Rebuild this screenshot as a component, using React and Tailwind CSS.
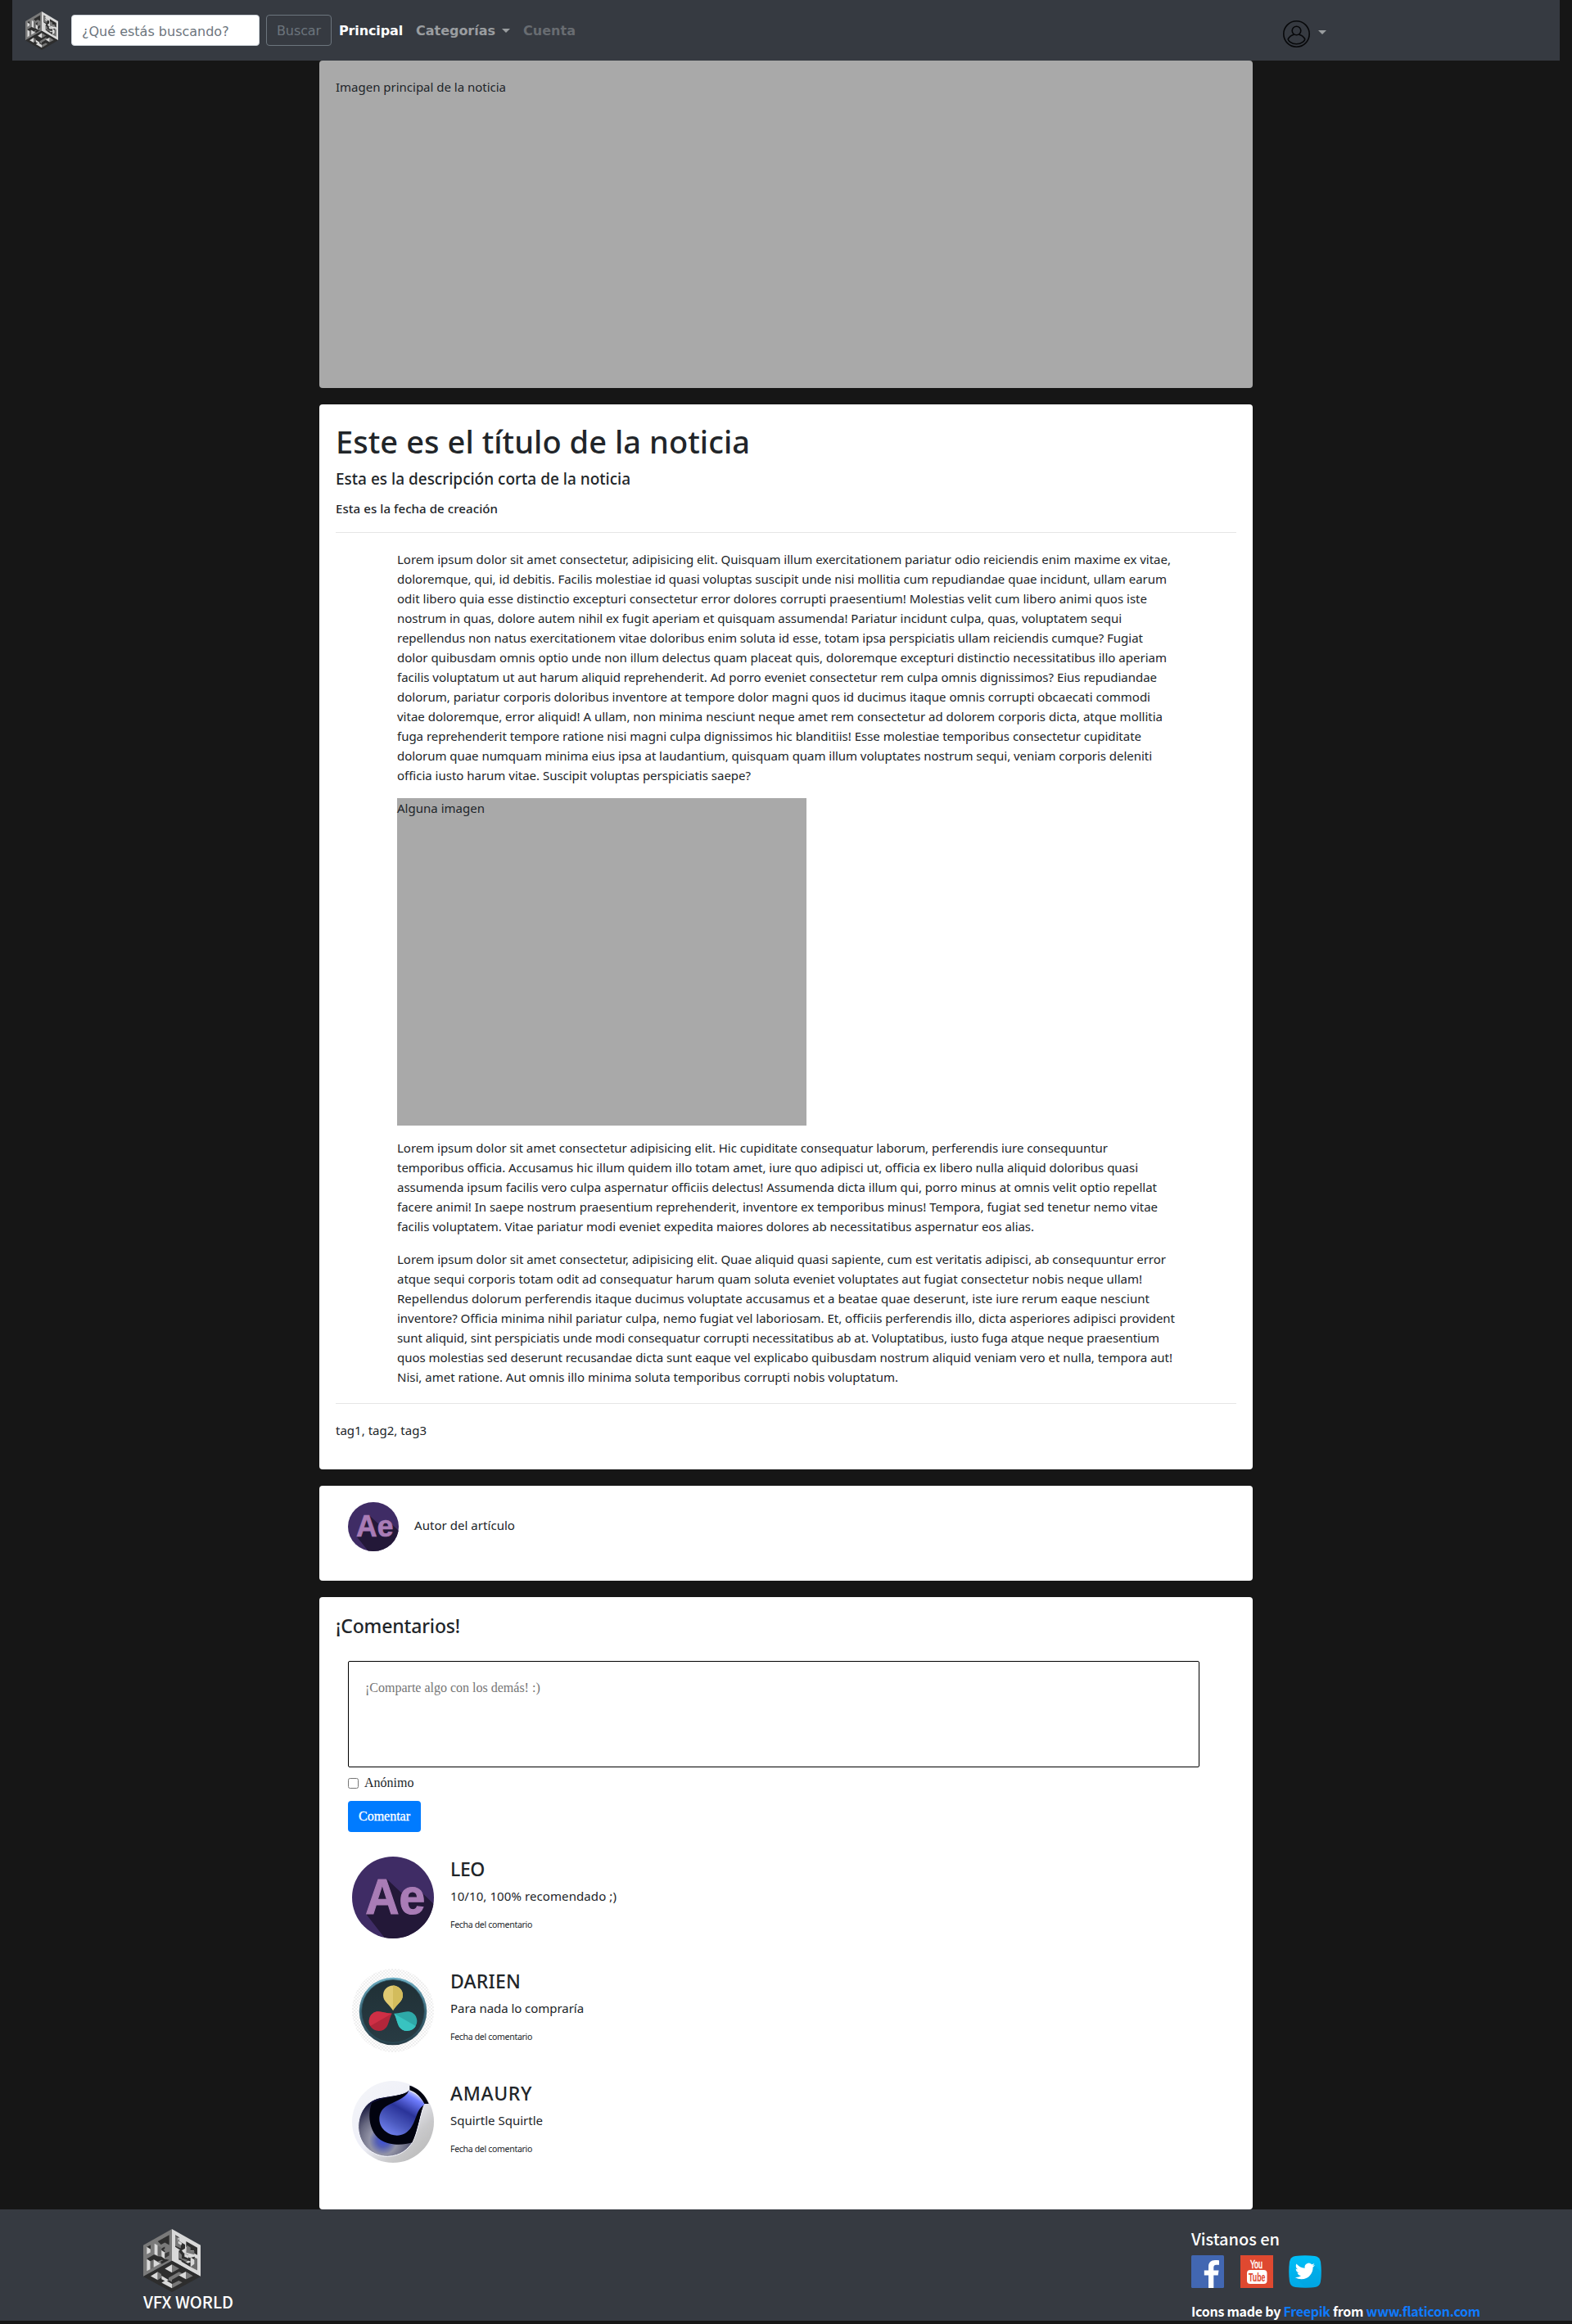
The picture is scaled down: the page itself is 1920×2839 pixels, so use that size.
import React, { useLayoutEffect, useRef, useState } from "react";

/* Text set to an exact advance width by adjusting its tracking. */
function Fit({ w, className = "", children }) {
  const ref = useRef(null);
  const [spacing, setSpacing] = useState(0);
  useLayoutEffect(() => {
    const el = ref.current;
    const natural = el.getBoundingClientRect().width - spacing * el.textContent.length;
    setSpacing((w - natural) / el.textContent.length);
  }, [w]);
  return (
    <span
      ref={ref}
      className={"inline-block whitespace-nowrap " + className}
      style={{ letterSpacing: spacing + "px" }}
    >
      {children}
    </span>
  );
}

const intro = [
  [945, "Lorem ipsum dolor sit amet consectetur, adipisicing elit. Quisquam illum exercitationem pariatur odio reiciendis enim maxime ex vitae,"],
  [940, "doloremque, qui, id debitis. Facilis molestiae id quasi voluptas suscipit unde nisi mollitia cum repudiandae quae incidunt, ullam earum"],
  [916, "odit libero quia esse distinctio excepturi consectetur error dolores corrupti praesentium! Molestias velit cum libero animi quos iste"],
  [885, "nostrum in quas, dolore autem nihil ex fugit aperiam et quisquam assumenda! Pariatur incidunt culpa, quas, voluptatem sequi"],
  [911, "repellendus non natus exercitationem vitae doloribus enim soluta id esse, totam ipsa perspiciatis ullam reiciendis cumque? Fugiat"],
  [940, "dolor quibusdam omnis optio unde non illum delectus quam placeat quis, doloremque excepturi distinctio necessitatibus illo aperiam"],
  [928, "facilis voluptatum ut aut harum aliquid reprehenderit. Ad porro eveniet consectetur rem culpa omnis dignissimos? Eius repudiandae"],
  [920, "dolorum, pariatur corporis doloribus inventore at tempore dolor magni quos id ducimus itaque omnis corrupti obcaecati commodi"],
  [935, "vitae doloremque, error aliquid! A ullam, non minima nesciunt neque amet rem consectetur ad dolorem corporis dicta, atque mollitia"],
  [909, "fuga reprehenderit tempore ratione nisi magni culpa dignissimos hic blanditiis! Esse molestiae temporibus consectetur cupiditate"],
  [922, "dolorum quae numquam minima eius ipsa at laudantium, quisquam quam illum voluptates nostrum sequi, veniam corporis deleniti"],
  [432, "officia iusto harum vitae. Suscipit voluptas perspiciatis saepe?"],
];
const middle = [
  [868, "Lorem ipsum dolor sit amet consectetur adipisicing elit. Hic cupiditate consequatur laborum, perferendis iure consequuntur"],
  [905, "temporibus officia. Accusamus hic illum quidem illo totam amet, iure quo adipisci ut, officia ex libero nulla aliquid doloribus quasi"],
  [928, "assumenda ipsum facilis vero culpa aspernatur officiis delectus! Assumenda dicta illum qui, porro minus at omnis velit optio repellat"],
  [929, "facere animi! In saepe nostrum praesentium reprehenderit, inventore ex temporibus minus! Tempora, fugiat sed tenetur nemo vitae"],
  [778, "facilis voluptatem. Vitae pariatur modi eveniet expedita maiores dolores ab necessitatibus aspernatur eos alias."],
];
const closing = [
  [939, "Lorem ipsum dolor sit amet consectetur, adipisicing elit. Quae aliquid quasi sapiente, cum est veritatis adipisci, ab consequuntur error"],
  [910, "atque sequi corporis totam odit ad consequatur harum quam soluta eveniet voluptates aut fugiat consectetur nobis neque ullam!"],
  [919, "Repellendus dolorum perferendis itaque ducimus voluptate accusamus et a beatae quae deserunt, iste iure rerum eaque nesciunt"],
  [950, "inventore? Officia minima nihil pariatur culpa, nemo fugiat vel laboriosam. Et, officiis perferendis illo, dicta asperiores adipisci provident"],
  [931, "sunt aliquid, sint perspiciatis unde modi consequatur corrupti necessitatibus ab at. Voluptatibus, iusto fuga atque neque praesentium"],
  [947, "quos molestias sed deserunt recusandae dicta sunt eaque vel explicabo quibusdam nostrum aliquid veniam vero et nulla, tempora aut!"],
  [612, "Nisi, amet ratione. Aut omnis illo minima soluta temporibus corrupti nobis voluptatum."],
];

function Paragraph({ lines, className = "" }) {
  return (
    <p className={"leading-6 " + className}>
      {lines.map(([w, text]) => (
        <span key={text} className="block h-6">
          <Fit w={w}>{text}</Fit>
        </span>
      ))}
    </p>
  );
}

function CubeLogo({ className }) {
  return (
    <svg viewBox="9 15 210 230" preserveAspectRatio="none" className={className}>
      <path d="M114 15 9 74v114l105-57z" fill="#7a7a7a" />
      <path d="M114 15 219 74v114l-105-57z" fill="#d9d9d9" />
      <path d="M114 131 219 188 114 245 9 188z" fill="#2d2d2d" />
      {/* left face */}
      <path d="M62 60 104 37v36L88 64l-14 8z" fill="#2e2e2e" />
      <path d="M22 80l13 8v12l-13 7z" fill="#d9d9d9" />
      <path d="M22 80l14-7v15z" fill="#2e2e2e" />
      <path d="M50 68l12 7v38l-12-6z" fill="#d9d9d9" />
      <path d="M62 75l12 7v26l-12 5z" fill="#6a6a6a" />
      <path d="M76 92l12 8v26l-12-9z" fill="#d9d9d9" />
      <path d="M76 92v-6l12-7v8l-6 4 6 3v6z" fill="#2e2e2e" />
      <path d="M88 104l16-7v14l-16 10z" fill="#3a3a3a" />
      <path d="M22 128v-5l26-15 14 6 14 2 12 8v6l-12-2-14 6-14-8-13 7z" fill="#2e2e2e" />
      <path d="M22 124l13 9v28l-13 7z" fill="#d9d9d9" />
      <path d="M35 133l12-7v30l-12 6z" fill="#6a6a6a" />
      <path d="M47 126l24 15-24 14z" fill="#d9d9d9" />
      <path d="M72 134l18-9 14 3-28 15z" fill="#2e2e2e" />
      {/* right face */}
      <path d="M126 37l14 8v14l22 13v14l-14 8-22-14z" fill="#2e2e2e" />
      <path d="M126 38l12 11-2 13 12 7-2 16-20-9z" fill="#777" />
      <path d="M135 45l6 4-4 9 14 8-3 8-11-7z" fill="#d9d9d9" />
      <path d="M166 60l41 23v27l-12-7v-9l-15-1-14-14z" fill="#2e2e2e" />
      <path d="M168 74l14 8v12l14 2v12l-30-7z" fill="#777" />
      <path d="M139 94l8-4 10 12 15 6 6 12 20-4v11l-12 8-12-5-10 5-25-8z" fill="#2e2e2e" />
      <path d="M139 97l11 12v13l22 6-6 7-27-15z" fill="#777" />
      <path d="M160 103l18 10-4 9-14-6z" fill="#d9d9d9" />
      <path d="M182 118l14 8v12l-14 5z" fill="#d9d9d9" />
      <path d="M196 118l11 5v43l-25-13 14-10z" fill="#6c6c6c" />
      <path d="M149 128l24 12 9-5v18l-33-19z" fill="#2e2e2e" />
      {/* bottom face */}
      <path d="M114 144v30l-26-14z" fill="#d9d9d9" />
      <path d="M114 144l27 15-27 15z" fill="#777" />
      <path d="M62 171v30l-26-14z" fill="#d9d9d9" />
      <path d="M62 171l13 8v14l-13 8z" fill="#777" />
      <path d="M76 185l26 16-6 4 18 10v16l-38-20 12-7-12-6z" fill="#d9d9d9" />
      <path d="M102 193l38-22 13 7-39 22v8l-12-6z" fill="#777" />
      <path d="M139 184l26-14v28z" fill="#d9d9d9" />
      <path d="M165 170l26 16-26 13z" fill="#777" />
      <path d="M114 216l25-13 13 7-38 21z" fill="#777" />
    </svg>
  );
}

function AfterEffects({ className }) {
  return (
    <svg viewBox="0 0 100 100" preserveAspectRatio="none" className={className}>
      <defs>
        <clipPath id="aeDisc"><circle cx="50" cy="50" r="50" /></clipPath>
      </defs>
      <g clipPath="url(#aeDisc)">
        <rect width="100" height="100" fill="#3f2c65" />
        <path d="M42 27 60 44 79 38 110 68V110H48L17 70z" fill="#231838" />
      </g>
      <text x="16.3" y="69.700" fontSize="60.500" fontFamily="Liberation Sans" fontWeight="700" fill="#a97cb6" stroke="#a97cb6" strokeWidth="1.200" textLength="73" lengthAdjust="spacingAndGlyphs">Ae</text>
    </svg>
  );
}

function Resolve({ className }) {
  return (
    <svg viewBox="0 0 100 102" className={className}>
      <defs>
        <pattern id="check" width="4" height="4" patternUnits="userSpaceOnUse">
          <rect width="4" height="4" fill="#fdfdfd" />
          <path d="M0 0h2v2H0zM2 2h2v2H2z" fill="#efefef" />
        </pattern>
        <linearGradient id="ring" x1="0" y1="0" x2="0" y2="1">
          <stop offset="0" stopColor="#6eaec3" />
          <stop offset="0.5" stopColor="#3d6b7c" />
          <stop offset="1" stopColor="#263c46" />
        </linearGradient>
        <linearGradient id="dial" x1="0" y1="0" x2="0" y2="1">
          <stop offset="0" stopColor="#203036" />
          <stop offset="1" stopColor="#283b43" />
        </linearGradient>
      </defs>
      <ellipse cx="50" cy="51" rx="50" ry="51" fill="url(#check)" />
      <circle cx="50" cy="52" r="41.3" fill="url(#ring)" />
      <circle cx="50" cy="52" r="38.4" fill="url(#dial)" stroke="#2f5361" strokeWidth="0.8" />
      <path d="M50 51C45 43 38 40 38 32.500A12 12 0 0 1 62 32.500C62 40 55 43 50 51z" fill="#e0ca72" />
      <path d="M50 51V20.500A12 12 0 0 1 62 32.500C62 40 55 43 50 51z" fill="#d3bc5c" />
      <g transform="rotate(-120 50 54)">
        <path d="M50 52.500C45 44.500 38 41.500 38 34A12 12 0 0 1 62 34C62 41.500 55 44.500 50 52.500z" fill="#b3263a" />
        <path d="M50 52.500V22A12 12 0 0 1 62 34C62 41.500 55 44.500 50 52.500z" fill="#cf2f45" />
      </g>
      <g transform="rotate(120 50 54)">
        <path d="M50 52.500C45 44.500 38 41.500 38 34A12 12 0 0 1 62 34C62 41.500 55 44.500 50 52.500z" fill="#2ea9a8" />
        <path d="M50 22V52.500C55 44.500 62 41.500 62 34A12 12 0 0 0 50 22z" fill="#38c3c0" />
      </g>
    </svg>
  );
}

function Cinema({ className }) {
  return (
    <svg viewBox="0 0 300 300" className={className}>
      <defs>
        <linearGradient id="shell" x1="0.1" y1="0.1" x2="0.85" y2="0.9">
          <stop offset="0" stopColor="#f3f4f8" />
          <stop offset="0.5" stopColor="#eeeff8" />
          <stop offset="0.8" stopColor="#c9c9cb" />
          <stop offset="1" stopColor="#bdbdbd" />
        </linearGradient>
        <radialGradient id="glow" cx="0.38" cy="0.76" r="0.62">
          <stop offset="0" stopColor="#3a4ddb" />
          <stop offset="0.16" stopColor="#5560b4" />
          <stop offset="0.34" stopColor="#9293a6" />
          <stop offset="0.6" stopColor="#676880" />
          <stop offset="1" stopColor="#0b0b33" />
        </radialGradient>
        <linearGradient id="lens" x1="0.85" y1="0.05" x2="0.3" y2="1">
          <stop offset="0" stopColor="#dfe1ff" />
          <stop offset="0.14" stopColor="#6f7dff" />
          <stop offset="0.45" stopColor="#2a3399" />
          <stop offset="0.75" stopColor="#4a58bd" />
          <stop offset="1" stopColor="#6c7ce8" />
        </linearGradient>
      </defs>
      <circle cx="150" cy="150" r="150" fill="url(#shell)" />
      <path d="M208 34C190 52 140 54 100 62 50 74 22 120 23 172 26 236 76 277 130 277 180 275 205 250 222 224 240 190 250 130 262 88z" fill="url(#glow)" stroke="#f7f8ff" strokeWidth="3" />
      <path d="M208 38C180 58 120 54 72 82 54 130 66 190 104 216 140 238 188 236 220 226 238 190 246 130 263 86z" fill="#02030f" />
      <path d="M211 17C244 26 270 54 281 84H264C252 58 234 42 211 34z" fill="#02030f" />
      <path d="M208 36C232 44 254 62 266 86 236 104 236 140 218 168 194 208 150 206 124 186 92 162 92 116 124 94 154 74 196 66 208 36z" fill="url(#lens)" />
    </svg>
  );
}

function Comment({ avatar, name, nameW, text, textW }) {
  return (
    <li className="flex h-[137px]">
      <div className="w-[120px] shrink-0">{avatar}</div>
      <div>
        <h4 className="pt-px text-[23px] font-medium leading-7"><Fit w={nameW}>{name}</Fit></h4>
        <p className="mt-[7px] leading-6"><Fit w={textW}>{text}</Fit></p>
        <p className="mt-[15px] text-[10.500px] leading-4"><Fit w={100}>Fecha del comentario</Fit></p>
      </div>
    </li>
  );
}

function Caret({ className = "" }) {
  return <span className={"inline-block h-0 w-0 border-x-[5px] border-t-[5px] border-x-transparent border-t-[#9a9da0] " + className} />;
}

export default function App() {
  return (
    <div className="h-[2839px] bg-[#161616] font-['Noto_Sans',sans-serif] text-[15px] leading-6 text-[#212529]">
      <nav className="mx-[15px] flex h-[74px] items-center bg-[#363a41] pl-4 font-['DejaVu_Sans',sans-serif] text-base">
        <CubeLogo className="h-[47px] w-10" />
        <input
          className="ml-4 h-[38px] w-[230px] rounded border border-[#ced4da] bg-white px-3 pt-0.5 placeholder:text-[#6c757d]"
          placeholder="¿Qué estás buscando?"
        />
        <button className="ml-2 h-[38px] w-20 rounded border border-[#6c757d] pt-px text-[#6c757d]">
          <Fit w={54}>Buscar</Fit>
        </button>
        <div className="ml-[9px] flex items-center pt-px font-bold">
          <Fit w={78} className="text-white">Principal</Fit>
          <Fit w={97} className="ml-4 text-[#9a9da0]">Categorías</Fit>
          <Caret className="ml-2" />
          <Fit w={64} className="ml-4 text-[#686c71]">Cuenta</Fit>
        </div>
        <div className="ml-auto mr-[285px] flex items-center">
          <svg viewBox="0 0 33 33" className="mt-[9px] h-[33px] w-[33px]" fill="none" stroke="#07080a" strokeWidth="1.600">
            <circle cx="16.500" cy="16.500" r="15.700" />
            <circle cx="16.500" cy="12.500" r="5.300" />
            <path d="M13.500 17.200C10 18 7.500 20.300 6.300 22.500 5.800 24.300 10 28.800 16.500 28.800S27.200 24.300 26.700 22.500C25.500 20.300 23 18 19.500 17.200" />
          </svg>
          <Caret className="ml-[10px] mt-1" />
        </div>
      </nav>

      <main className="mx-auto flex w-[1140px] flex-col gap-5">
        <section className="h-[400px] rounded bg-[#a9a9a9] px-5 pt-5">
          <Fit w={208}>Imagen principal de la noticia</Fit>
        </section>

        <article className="h-[1301px] rounded bg-white px-5 pt-5">
          <h1 className="h-[58px] text-[38px] font-medium leading-[50px]"><Fit w={506}>Este es el título de la noticia</Fit></h1>
          <h5 className="h-[39px] text-[19px] font-medium leading-[26px]"><Fit w={360}>Esta es la descripción corta de la noticia</Fit></h5>
          <h6 className="h-[39px] text-[15px] font-medium leading-5"><Fit w={198}>Esta es la fecha de creación</Fit></h6>
          <hr className="border-t border-black/10" />
          <div className="ml-[75px] pt-5">
            <Paragraph lines={intro} />
            <div className="mt-4 h-[400px] w-[500px] bg-[#a9a9a9]"><Fit w={107}>Alguna imagen</Fit></div>
            <Paragraph lines={middle} className="mt-[15px]" />
            <Paragraph lines={closing} className="mt-4" />
          </div>
          <hr className="mt-5 border-t border-black/10" />
          <p className="mt-5"><Fit w={111}>tag1, tag2, tag3</Fit></p>
        </article>

        <section className="flex h-[116px] rounded bg-white pl-[35px] pt-5">
          <AfterEffects className="h-[60px] w-[62px]" />
          <p className="ml-[19px] mt-4"><Fit w={123}>Autor del artículo</Fit></p>
        </section>

        <section className="h-[748px] rounded bg-white px-5 pt-5">
          <h4 className="text-[23px] font-medium leading-[30px]"><Fit w={152}>¡Comentarios!</Fit></h4>
          <form className="mt-7 pl-[15px] font-['Liberation_Serif',serif] text-base">
            <textarea
              className="block h-[130px] w-[1040px] resize-none rounded-[2px] border border-black px-5 py-5 leading-6 placeholder:text-[#757575]"
              placeholder="¡Comparte algo con los demás! :)"
            />
            <label className="mt-[7px] flex h-6 items-center">
              <input type="checkbox" className="h-[13px] w-[13px]" />
              <span className="ml-[7px]">Anónimo</span>
            </label>
            <button type="button" className="mt-[10px] block h-[38px] w-[89px] rounded bg-[#007bff] text-white [-webkit-text-stroke:0.3px_white]">Comentar</button>
          </form>
          <ul className="mt-[30px] pl-5">
            <Comment avatar={<AfterEffects className="h-[100px] w-[100px]" />} name="LEO" nameW={42} text="10/10, 100% recomendado ;)" textW={203} />
            <Comment avatar={<Resolve className="h-[102px] w-[100px]" />} name="DARIEN" nameW={86} text="Para nada lo compraría" textW={163} />
            <Comment avatar={<Cinema className="h-[100px] w-[100px]" />} name="AMAURY" nameW={100} text="Squirtle Squirtle" textW={113} />
          </ul>
        </section>
      </main>

      <footer className="flex h-[136px] justify-between bg-[#363a41] pl-[175px] font-['Noto_Sans_CJK_JP',sans-serif] font-medium text-white">
        <div className="pt-6">
          <CubeLogo className="h-[77px] w-[70px]" />
          <h5 className="text-xl leading-6"><Fit w={110}>VFX WORLD</Fit></h5>
        </div>
        <div className="w-[465px] pt-6">
          <h5 className="text-xl leading-6"><Fit w={108}>Vistanos en</Fit></h5>
          <div className="mt-2 flex">
            <svg viewBox="0 0 40 40" className="h-10 w-10">
              <rect width="40" height="40" rx="1.500" fill="#4267b2" />
              <path d="M21 40V24.500h-5.200v-6H21v-4.500C21 8.800 24.200 6 29 6c2.200 0 4.200.2 5 .3v5.500h-3.400c-2.600 0-3.300 1.300-3.300 3.200v3.500h6.200l-.8 6h-5.400V40z" fill="#fff" />
            </svg>
            <svg viewBox="0 0 40 40" className="ml-5 h-10 w-10">
              <rect width="40" height="40" fill="#df4930" />
              <text x="12" y="16" fontSize="14" fontFamily="Liberation Sans" stroke="#fff" strokeWidth="0.500" fill="#fff" textLength="15" lengthAdjust="spacingAndGlyphs">You</text>
              <rect x="8" y="18" width="24.500" height="17" rx="4" fill="#fff" />
              <text x="10" y="31.600" fontSize="14" fontFamily="Liberation Sans" fontWeight="700" fill="#df4930" textLength="20.500" lengthAdjust="spacingAndGlyphs">Tube</text>
            </svg>
            <svg viewBox="0 0 40 40" className="ml-[19px] h-10 w-10">
              <defs>
                <linearGradient id="sky" x1="0" y1="0" x2="0" y2="1">
                  <stop offset="0" stopColor="#00bff8" />
                  <stop offset="1" stopColor="#00a8e6" />
                </linearGradient>
              </defs>
              <path d="M8 1Q20-.6 32 1 38 2 39 8 40.600 20 39 32 38 38 32 39 20 40.600 8 39 2 38 1 32-.6 20 1 8 2 2 8 1z" fill="url(#sky)" />
              <path d="M31 12 39.300 20Q40 30 38 35 35 39.300 28 39.600H20L10 29z" fill="#009fdb" opacity=".4" />
              <path transform="translate(7.800 7.300) scale(1.010)" d="M23.950 4.570a10 10 0 0 1-2.830.78 4.960 4.960 0 0 0 2.170-2.730c-.95.560-2 .960-3.130 1.190a4.920 4.920 0 0 0-8.380 4.480C7.690 8.100 4.070 6.130 1.640 3.160a4.820 4.820 0 0 0-.67 2.480c0 1.710.87 3.210 2.190 4.100a4.900 4.900 0 0 1-2.230-.62v.06a4.920 4.920 0 0 0 3.950 4.830 5 5 0 0 1-2.210.08 4.940 4.940 0 0 0 4.600 3.420A9.870 9.870 0 0 1 0 19.540a14 14 0 0 0 7.550 2.210c9.050 0 14-7.500 14-13.980 0-.21 0-.42-.02-.63a9.940 9.940 0 0 0 2.460-2.550z" fill="#fff" />
            </svg>
          </div>
          <p className="mt-[17px] h-[22px] text-base font-bold leading-[22px]">
            <Fit w={353}>
              Icons made by <a className="text-[#0f7bff]">Freepik</a> from <a className="text-[#0f7bff]">www.flaticon.com</a>
            </Fit>
          </p>
        </div>
      </footer>
    </div>
  );
}
